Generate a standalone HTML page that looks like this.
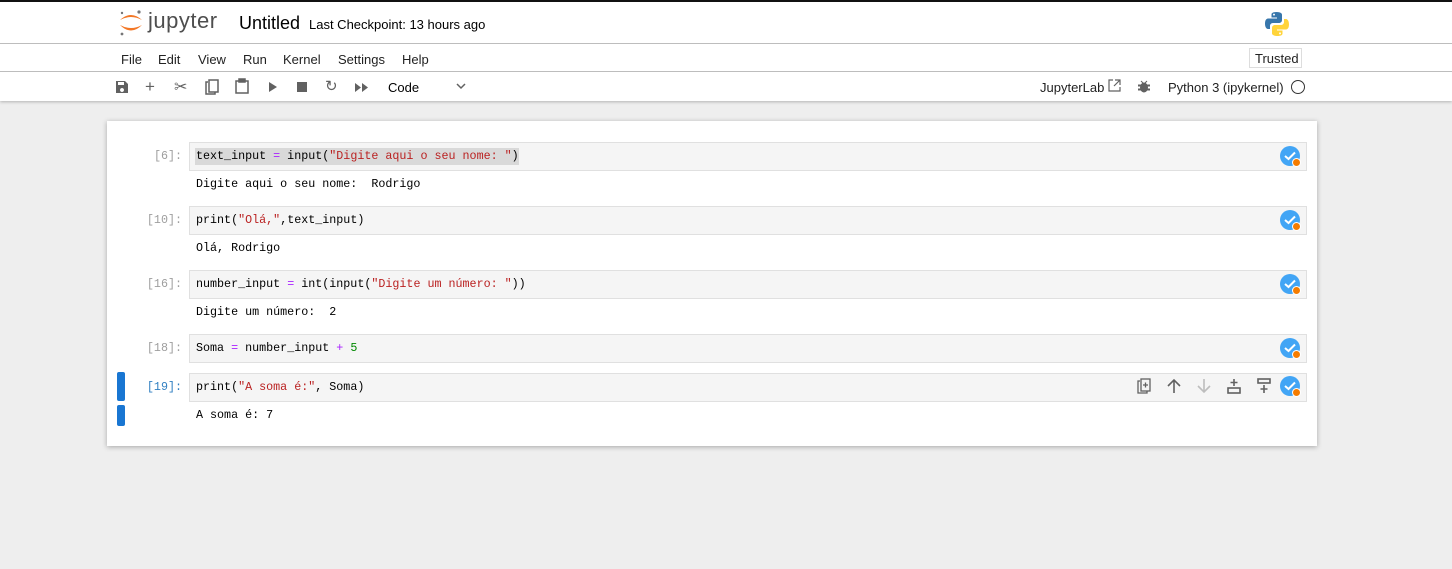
<!DOCTYPE html>
<html><head><meta charset="utf-8"><style>
*{margin:0;padding:0;box-sizing:border-box}
body{width:1452px;height:569px;overflow:hidden;background:#eeeeee;font-family:"Liberation Sans",sans-serif;position:relative;color:#000}
.a{position:absolute}
.hdr{left:0;top:0;width:1452px;height:101px;background:#fff;border-top:2px solid #111;box-shadow:0 1px 3px rgba(0,0,0,.25)}
.line{left:0;width:1452px;height:1px;background:#bdbdbd}
.menu span{position:absolute;top:52px;font-size:13px;color:#222}
.ic{position:absolute;fill:#616161}
.nb{left:107px;top:121px;width:1210px;height:325px;background:#fff;box-shadow:0 1px 5px rgba(0,0,0,.3)}
.inp{position:absolute;left:189px;width:1118px;height:29px;background:#f5f5f5;border:1px solid #e0e0e0}
.code{position:absolute;font-family:"Liberation Mono",monospace;font-size:11.7px;white-space:pre;color:#000}
.pr{position:absolute;font-family:"Liberation Mono",monospace;font-size:11.7px;color:#9e9e9e;text-align:right;width:70px;left:112px}
.s{color:#ba2121}.o{color:#aa22ff}.n{color:#080}
.chk{position:absolute;left:1280px;width:20px;height:20px;border-radius:50%;background:#42a5f5}
.chk:after{content:"";position:absolute;left:12px;top:12px;width:7px;height:7px;border-radius:50%;background:#f57c00;border:1px solid #fff}
.chk svg{position:absolute;left:4px;top:5px}
.bar{position:absolute;left:117px;width:8px;background:#1976d2;border-radius:2px}
</style></head><body>
<div class="a hdr"></div>
<div class="a line" style="top:43px"></div>
<div class="a line" style="top:71px"></div>
<!-- logo -->
<svg class="a" style="left:118px;top:9px" width="26" height="28" viewBox="0 0 26 28">
<path d="M2 11 Q13 1 24 11 Q13 5 2 11Z" fill="#f37726"/>
<path d="M2 16 Q13 27 24 16 Q13 22 2 16Z" fill="#f37726"/>
<circle cx="21" cy="3" r="1.6" fill="#767677"/><circle cx="4" cy="4" r="1.2" fill="#767677"/><circle cx="4" cy="25" r="1.4" fill="#767677"/>
</svg>
<div class="a" style="left:148px;top:8px;font-size:22px;color:#4e4e4e;letter-spacing:0.5px">jupyter</div>
<div class="a" style="left:239px;top:13px;font-size:18px;color:#000">Untitled</div>
<div class="a" style="left:309px;top:17px;font-size:13px;color:#000">Last Checkpoint: 13 hours ago</div>
<svg class="a" style="left:1264px;top:11px" width="26" height="26" viewBox="0 0 26 26">
<path d="M12.5 1C7 1 7.5 3.5 7.5 3.5V6.5H13V7.5H4.5S1 7 1 12.5 4 18 4 18H6V15S6 12 9 12H15S18 12 18 9V4S18.5 1 12.5 1Z" fill="#3776ab"/>
<circle cx="10" cy="3.6" r="1" fill="#fff"/>
<path d="M13.5 25C19 25 18.5 22.5 18.5 22.5V19.5H13V18.5H21.5S25 19 25 13.5 22 8 22 8H20V11S20 14 17 14H11S8 14 8 17V22S7.5 25 13.5 25Z" fill="#ffd43b"/>
<circle cx="16" cy="22.4" r="1" fill="#fff"/>
</svg>
<div class="menu">
<span style="left:121px">File</span><span style="left:158px">Edit</span><span style="left:198px">View</span><span style="left:243px">Run</span><span style="left:283px">Kernel</span><span style="left:338px">Settings</span><span style="left:402px">Help</span>
</div>
<div class="a" style="left:1249px;top:48px;width:53px;height:20px;border:1px solid #ddd;font-size:13px;padding:2px 0 0 5px;color:#222">Trusted</div>
<!-- toolbar -->
<svg class="ic" style="left:115px;top:80px" width="14" height="14" viewBox="0 0 14 14"><path d="M1 1H10L13 4V13H1Z M3 2V5H9V2Z M7 8A2 2 0 1 0 7.01 8Z"/></svg>
<div class="a" style="left:145px;top:77px;font-size:17px;color:#616161">+</div>
<div class="a" style="left:174px;top:77px;font-size:16px;color:#616161">✂</div>
<svg class="a" style="left:205px;top:79px" width="14" height="16" viewBox="0 0 14 16" fill="none" stroke="#616161" stroke-width="1.5"><path d="M3 3H1V15H10V13"/><rect x="4" y="1" width="9" height="12"/></svg>
<svg class="a" style="left:235px;top:78px" width="14" height="16" viewBox="0 0 14 16" fill="none" stroke="#616161" stroke-width="1.5"><rect x="1" y="3" width="12" height="12"/><rect x="4" y="1" width="6" height="3" fill="#616161"/></svg>
<svg class="ic" style="left:268px;top:82px" width="10" height="10"><path d="M1 0L9 5L1 10Z"/></svg>
<svg class="ic" style="left:297px;top:82px" width="10" height="10"><rect width="10" height="10"/></svg>
<div class="a" style="left:325px;top:77px;font-size:15px;color:#616161">↻</div>
<svg class="ic" style="left:355px;top:83px" width="14" height="9"><path d="M0 0L6 4.5L0 9Z M7 0L13 4.5L7 9Z"/></svg>
<div class="a" style="left:388px;top:80px;font-size:13px;color:#000">Code</div>
<svg class="a" style="left:456px;top:83px" width="10" height="7"><path d="M1 1L5 5L9 1" fill="none" stroke="#616161" stroke-width="1.5"/></svg>
<div class="a" style="left:1040px;top:80px;font-size:13px;color:#222">JupyterLab</div>
<svg class="a" style="left:1108px;top:79px" width="13" height="13" fill="none" stroke="#616161" stroke-width="1.2"><path d="M5 1H1V12H12V8 M7 1H12V6 M12 1L6 7"/></svg>
<svg class="ic" style="left:1138px;top:80px" width="12" height="13"><ellipse cx="6" cy="7.5" rx="4" ry="5"/><path d="M0 5H12V6H0Z M0 9H12V10H0Z M3 1L5 3 M9 1L7 3" stroke="#616161"/></svg>
<div class="a" style="left:1168px;top:80px;font-size:13px;color:#222">Python 3 (ipykernel)</div>
<div class="a" style="left:1291px;top:80px;width:14px;height:14px;border:1.5px solid #333;border-radius:50%"></div>
<!-- notebook -->
<div class="a nb"></div>
<div class="pr" style="top:149px">[6]:</div>
<div class="inp" style="top:142px"></div>
<div class="a" style="left:195px;top:148px;width:324px;height:17px;background:#d9d9d9"></div>
<div class="code" style="left:196px;top:149px">text_input <span class="o">=</span> input(<span class="s">"Digite aqui o seu nome: "</span>)</div>
<div class="code" style="left:196px;top:177px">Digite aqui o seu nome:  Rodrigo</div>

<div class="pr" style="top:213px">[10]:</div>
<div class="inp" style="top:206px"></div>
<div class="code" style="left:196px;top:213px">print(<span class="s">"Olá,"</span>,text_input)</div>
<div class="code" style="left:196px;top:241px">Olá, Rodrigo</div>

<div class="pr" style="top:277px">[16]:</div>
<div class="inp" style="top:270px"></div>
<div class="code" style="left:196px;top:277px">number_input <span class="o">=</span> int(input(<span class="s">"Digite um número: "</span>))</div>
<div class="code" style="left:196px;top:305px">Digite um número:  2</div>

<div class="pr" style="top:341px">[18]:</div>
<div class="inp" style="top:334px"></div>
<div class="code" style="left:196px;top:341px">Soma <span class="o">=</span> number_input <span class="o">+</span> <span class="n">5</span></div>

<div class="bar" style="top:372px;height:29px"></div>
<div class="bar" style="top:405px;height:21px"></div>
<div class="pr" style="top:380px;color:#307fc1">[19]:</div>
<div class="inp" style="top:373px"></div>
<div class="code" style="left:196px;top:380px">print(<span class="s">"A soma é:"</span>, Soma)</div>
<div class="code" style="left:196px;top:408px">A soma é: 7</div>

<svg class="a" style="left:1137px;top:378px" width="14" height="16" fill="none" stroke="#616161" stroke-width="1.3"><path d="M3 3H1V15H10V13"/><rect x="4" y="1" width="9" height="12"/><path d="M8.5 4.5V9.5M6 7H11"/></svg>
<svg class="a" style="left:1167px;top:378px" width="14" height="16" fill="none" stroke="#616161" stroke-width="1.6"><path d="M7 15V2M1 8L7 2L13 8"/></svg>
<svg class="a" style="left:1197px;top:378px" width="14" height="16" fill="none" stroke="#bdbdbd" stroke-width="1.6"><path d="M7 1V14M1 8L7 14L13 8"/></svg>
<svg class="a" style="left:1227px;top:378px" width="14" height="16" fill="none" stroke="#616161" stroke-width="1.6"><rect x="1" y="10" width="12" height="5"/><path d="M7 1V8M3.5 4.5H10.5"/></svg>
<svg class="a" style="left:1257px;top:378px" width="14" height="16" fill="none" stroke="#616161" stroke-width="1.6"><rect x="1" y="1" width="12" height="4"/><path d="M7 7V15M3.5 11H10.5"/></svg>

<div class="chk" style="top:146px"><svg width="12" height="10"><path d="M1 5L4.5 8L11 1.5" fill="none" stroke="#fff" stroke-width="2"/></svg></div>
<div class="chk" style="top:210px"><svg width="12" height="10"><path d="M1 5L4.5 8L11 1.5" fill="none" stroke="#fff" stroke-width="2"/></svg></div>
<div class="chk" style="top:274px"><svg width="12" height="10"><path d="M1 5L4.5 8L11 1.5" fill="none" stroke="#fff" stroke-width="2"/></svg></div>
<div class="chk" style="top:338px"><svg width="12" height="10"><path d="M1 5L4.5 8L11 1.5" fill="none" stroke="#fff" stroke-width="2"/></svg></div>
<div class="chk" style="top:376px"><svg width="12" height="10"><path d="M1 5L4.5 8L11 1.5" fill="none" stroke="#fff" stroke-width="2"/></svg></div>
</body></html>
